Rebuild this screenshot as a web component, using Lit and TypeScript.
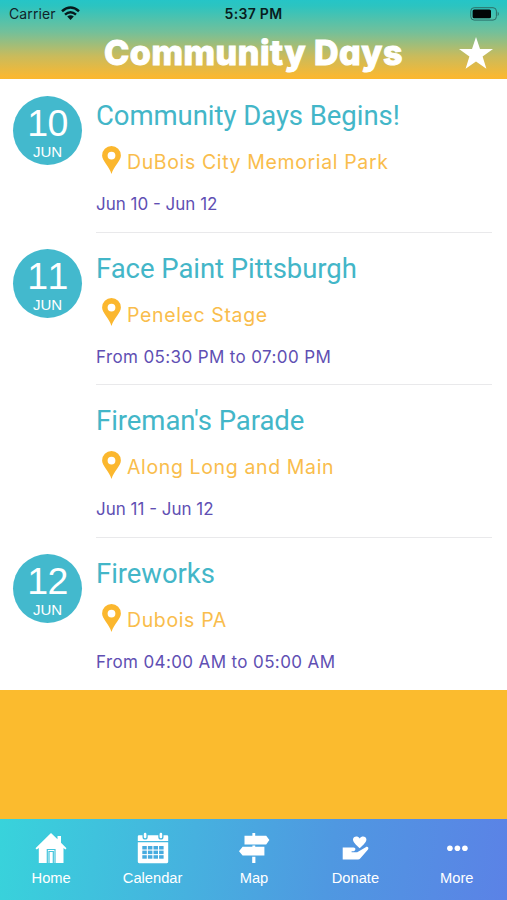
import { LitElement, html, css, svg, nothing } from "lit";
import { customElement, property } from "lit/decorators.js";

interface EventItem {
  day?: string;
  month?: string;
  title: string;
  place: string;
  when: string;
  timed?: boolean;
}

const EVENTS: EventItem[] = [
  { day: "10", month: "JUN", title: "Community Days Begins!", place: "DuBois City Memorial Park", when: "Jun 10 - Jun 12" },
  { day: "11", month: "JUN", title: "Face Paint Pittsburgh", place: "Penelec Stage", when: "From 05:30 PM to 07:00 PM", timed: true },
  { title: "Fireman's Parade", place: "Along Long and Main", when: "Jun 11 - Jun 12" },
  { day: "12", month: "JUN", title: "Fireworks", place: "Dubois PA", when: "From 04:00 AM to 05:00 AM", timed: true },
];

const TABS = [
  {
    label: "Home",
    icon: svg`<path fill="#fff" d="M16 1 L22.5 7.3 V4 H26 V10.8 L31.5 16.3 L30.4 17.6 L28.5 16 V31 H3.8 V16 L1.7 17.6 L.5 16.3 Z"/>
      <path fill="none" stroke="#45c5dc" stroke-width="1.2" d="M12.3 31 V17.5 H20 V31 M14 31 V19.5 H18.3 V31"/>`,
  },
  {
    label: "Calendar",
    icon: svg`<path fill="#fff" d="M2 3.2 H5.5 V5 a2.6 2.6 0 0 0 5.2 0 V3.2 H21.3 V5 a2.6 2.6 0 0 0 5.2 0 V3.2 H30 a1.2 1.2 0 0 1 1.2 1.2 V9 H.8 V4.4 A1.2 1.2 0 0 1 2 3.2Z M.8 10.3 H31.2 V29.8 a1.4 1.4 0 0 1 -1.4 1.4 H2.2 a1.4 1.4 0 0 1 -1.4 -1.4Z"/>
      <rect x="6.8" y=".8" width="2.6" height="5.5" rx="1.3" fill="#fff"/><rect x="22.6" y=".8" width="2.6" height="5.5" rx="1.3" fill="#fff"/>
      ${[0, 1, 2, 3].map((c) => [0, 1, 2].map((r) => svg`<rect x=${5.3 + c * 5.6} y=${14 + r * 4.6} width="4.5" height="3.5" fill="#46abdf"/>`))}`,
  },
  {
    label: "Map",
    icon: svg`<path fill="#fff" d="M14.4 1 H17.2 V3.7 H28.2 L31.4 8 L28.2 12.5 H17.2 H6.5 V3.7 H14.4Z M14.4 13.6 H17.2 V14.7 H26.4 V23.6 H4.6 L1 19.2 L4.6 14.7 H14.4Z M14.2 24.8 H17.4 V31 H14.2Z"/>`,
  },
  {
    label: "Donate",
    icon: svg`<path transform="translate(1 0)" fill="#fff" d="M19.7 16.2 C16 12.7 13 10.4 13 7.5 C13 4.1 17.7 3.1 19.7 6.4 C21.7 3.1 26.4 4.1 26.4 7.5 C26.4 10.4 23.4 12.7 19.7 16.2Z M2.7 15.6 H13.5 C16.2 15.6 15.9 19.1 13.5 19.2 H11.6 V20.3 H17.2 L25.7 15.2 C27.8 14 29.3 16.1 27.8 17.8 L20.4 26.2 A3 3 0 0 1 18 27.4 H2.7Z"/>`,
  },
  {
    label: "More",
    icon: svg`<g fill="#fff"><circle cx="8.9" cy="16.2" r="2.8"/><circle cx="16.4" cy="16.2" r="2.8"/><circle cx="23.9" cy="16.2" r="2.8"/></g>`,
  },
];

@customElement("status-header")
class StatusHeader extends LitElement {
  static styles = css`
    :host {
      display: block;
      height: 79px;
      flex: none;
      background: linear-gradient(#25c5c7 0, #2cc4c0 6px, #73c09a 32px, #c9bb5c 56px, #f8b833 76px, #fbb72e 100%);
      color: #10242a;
    }
    .status {
      display: grid;
      grid-template-columns: 1fr auto 1fr;
      align-items: center;
      height: 28px;
      padding: 0 7px 0 9px;
      box-sizing: border-box;
      font: 14px/28px Inter, "Liberation Sans", sans-serif;
    }
    .carrier { display: flex; align-items: center; gap: 5px; letter-spacing: .1px; }
    .carrier svg { margin-bottom: 2px; }
    .time { font-weight: 600; font-size: 14px; color: #071d20; letter-spacing: .3px; margin-right: 2px; }
    .battery { justify-self: end; margin-top: -1px; }
    svg { display: block; }
    .bar { display: grid; grid-template-columns: 62px 1fr 62px; height: 51px; }
    .title {
      grid-column: 2;
      margin: 0;
      text-align: center;
      white-space: nowrap;
      color: #fff;
      font: 800 34px/49px Inter, "Open Sans", sans-serif;
      font-feature-settings: "cv11", "ss03";
      letter-spacing: .55px;
      -webkit-text-stroke: 1px #fff;
    }
    .star { justify-self: center; margin: 9px 0 0; }
  `;
  render() {
    return html`
      <div class="status">
        <div class="carrier"><span>Carrier</span>
          <svg width="19" height="14" viewBox="0 0 19 14" fill="none" stroke="#06191c" stroke-width="2.5">
            <path d="M1 5.2 Q9.5 -2.3 18 5.2 M4 8.6 Q9.5 3.8 15 8.6"/>
            <path d="M6.2 10.6 Q9.5 7.8 12.8 10.6 L9.5 14Z" fill="#06191c" stroke="none"/>
          </svg>
        </div>
        <span class="time">5:37 PM</span>
        <svg class="battery" width="30" height="14" viewBox="0 0 30 14">
          <rect x=".8" y=".7" width="25.6" height="12.4" rx="3.4" fill="none" stroke="#2c6f68" />
          <rect x="2.6" y="2.5" width="18.4" height="8.8" rx="1.6" fill="#020606"/>
          <path d="M27.7 4.6 Q30 7 27.7 9.3Z" fill="#2c6f68"/>
        </svg>
      </div>
      <div class="bar">
        <h1 class="title">Community Days</h1>
        <svg class="star" width="34" height="32" viewBox="0 0 34 32"><path fill="#fff" d="M17 0 L21 11.9 H34 L23.6 19.5 L27.4 31.8 L17 24.4 L6.6 31.8 L10.4 19.5 L0 11.9 H13Z"/></svg>
      </div>`;
  }
}

@customElement("event-row")
class EventRow extends LitElement {
  @property({ attribute: false }) event!: EventItem;
  static styles = css`
    :host { display: grid; grid-template-columns: 83px 1fr; height: 152.7px; padding: 0 15px 0 13px; box-sizing: border-box; }
    .badge {
      width: 69px; height: 69px; margin-top: 16px; border-radius: 50%;
      background: #43b9cd; color: #fff; text-align: center;
      font-family: "Liberation Sans", Arial, sans-serif;
    }
    .day { font-size: 37.5px; line-height: 38px; padding-top: 8px; font-kerning: none; letter-spacing: -.5px; }
    .month { font-size: 15px; line-height: 18px; margin-top: 1px; }
    .body { border-bottom: 1px solid #e9e9eb; white-space: nowrap; }
    :host([last]) .body { border-bottom-color: transparent; }
    .title { margin: 20px 0 0; font: 400 27.5px/32px Roboto, sans-serif; color: #43b6c8; letter-spacing: -.05px; }
    .place { display: flex; align-items: center; gap: 6px; margin-top: 12px; padding-left: 6px; height: 32px; color: #f9bd4c; font: 400 19.5px/32px Inter, sans-serif; letter-spacing: .63px; }
    .place svg { flex: none; margin-top: -1px; }
    .place span { padding-top: 4px; }
    .when { margin-top: 16px; font: 17px/24px Inter, sans-serif; color: #604fb3; }
    .timed { letter-spacing: .38px; }
  `;
  render() {
    const e = this.event;
    return html`
      <div>${e.day ? html`<div class="badge"><div class="day">${e.day}</div><div class="month">${e.month}</div></div>` : nothing}</div>
      <div class="body">
        <h2 class="title">${e.title}</h2>
        <div class="place">
          <svg width="19" height="28" viewBox="0 0 19 28"><path fill="#fbb72e" fill-rule="evenodd" d="M9.5 0 A9.4 9.4 0 0 1 18.9 9.4 C18.9 15 12 19.5 9.5 28 C7 19.5 .1 15 .1 9.4 A9.4 9.4 0 0 1 9.5 0Z M9.5 5.7 a3.9 3.9 0 1 0 0 7.8 a3.9 3.9 0 1 0 0 -7.8Z"/></svg>
          <span>${e.place}</span>
        </div>
        <div class="when ${e.timed ? "timed" : ""}">${e.when}</div>
      </div>`;
  }
}

@customElement("tab-bar")
class TabBar extends LitElement {
  static styles = css`
    :host {
      display: grid; grid-template-columns: repeat(5, 1fr); height: 81px; flex: none; box-sizing: border-box;
      background: linear-gradient(97deg, #38d3db, #46b1df 38%, #4f98e1 65%, #5b82e6);
      color: #fff; font: 14.7px/18px "Liberation Sans", Arial, sans-serif;
    }
    .tab { display: flex; flex-direction: column; align-items: center; padding: 13px 0 0 1px; }
    .label { margin-top: 5px; }
  `;
  render() {
    return TABS.map((t) => html`<div class="tab"><svg width="32" height="32" viewBox="0 0 32 32">${t.icon}</svg><span class="label">${t.label}</span></div>`);
  }
}

@customElement("app-root")
class AppRoot extends LitElement {
  static styles = css`
    :host { display: flex; flex-direction: column; height: 900px; background: #fbbb2e; overflow: hidden; }
    .list { background: #fff; height: 611px; padding-top: 1px; box-sizing: border-box; overflow: hidden; flex: none; }
    .space { flex: 1; }
  `;
  render() {
    return html`<status-header></status-header>
      <div class="list">${EVENTS.map((e, i) => html`<event-row .event=${e} ?last=${i === EVENTS.length - 1}></event-row>`)}</div>
      <div class="space"></div>
      <tab-bar></tab-bar>`;
  }
}
